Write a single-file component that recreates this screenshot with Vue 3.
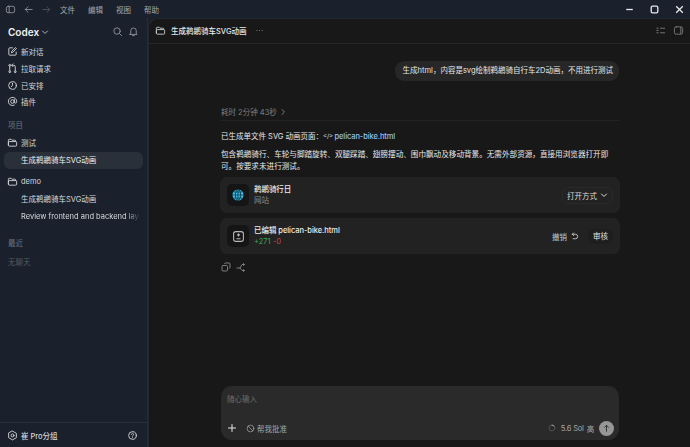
<template>
  <div class="window">
    <header class="titlebar">
      <svg class="ic tb-panel" viewBox="0 0 12 12"><rect x="1.5" y="2.5" width="9" height="7" rx="2" /><path d="M4.5 2.5v7" /></svg>
      <svg class="ic tb-arrow" viewBox="0 0 12 12"><path d="M10 6H2.5M5.5 3 2.5 6l3 3" /></svg>
      <svg class="ic tb-arrow dim" viewBox="0 0 12 12"><path d="M2 6h7.5M6.5 3l3 3-3 3" /></svg>
      <nav class="menu">
        <span v-for="m in menus" :key="m">{{ m }}</span>
      </nav>
      <div class="win-controls">
        <svg class="wc" viewBox="0 0 10 10"><path d="M2 5h6" /></svg>
        <svg class="wc" viewBox="0 0 10 10"><rect x="2" y="2" width="6" height="6" rx="1.2" /></svg>
        <svg class="wc" viewBox="0 0 10 10"><path d="m2 2 6 6M8 2 2 8" /></svg>
      </div>
    </header>

    <div class="body">
      <aside class="sidebar">
        <div class="brand">
          <span class="brand-name">Codex</span>
          <svg class="ic chevron" viewBox="0 0 8 8"><path d="m1.5 3 2.5 2.5L6.5 3" /></svg>
          <span class="spacer"></span>
          <svg class="ic side-top" viewBox="0 0 12 12"><circle cx="5.5" cy="5.5" r="3.5" /><path d="m8 8 2.5 2.5" /></svg>
          <svg class="ic side-top" viewBox="0 0 12 12"><path d="M3 8.5V5.2a3 3 0 0 1 6 0v3.3l1 .7H2zM5 10.5h2" /></svg>
        </div>

        <div class="nav">
          <div class="nav-item">
            <svg class="ic" viewBox="0 0 12 12"><path d="M6 2H3a1 1 0 0 0-1 1v6a1 1 0 0 0 1 1h6a1 1 0 0 0 1-1V6.500M5 7l.4-1.600L9.200 1.700l1.100 1.100L6.600 6.600z" /></svg>
            新对话
          </div>
          <div class="nav-item">
            <svg class="ic" viewBox="0 0 12 12"><path d="M3 4v4.500M3 10.500a1 1 0 1 0 0-2 1 1 0 0 0 0 2M3 3.500a1 1 0 1 0 0-2 1 1 0 0 0 0 2M5.500 2.500h2A1.500 1.500 0 0 1 9 4v4.500M9 10.500a1 1 0 1 0 0-2 1 1 0 0 0 0 2M6.500 1 5 2.500 6.500 4" /></svg>
            拉取请求
          </div>
          <div class="nav-item">
            <svg class="ic" viewBox="0 0 12 12"><circle cx="6" cy="6" r="4.200" /><path d="M6 3.500V6L4.500 7.500" /></svg>
            已安排
          </div>
          <div class="nav-item">
            <svg class="ic" viewBox="0 0 12 12"><circle cx="6" cy="6" r="2" /><path d="M8 4v2.800a1.300 1.300 0 0 0 2.500 0V6A4.500 4.500 0 1 0 8 10" /></svg>
            插件
          </div>
        </div>

        <div class="section-label projects">项目</div>
        <div class="nav-item">
          <svg class="ic" viewBox="0 0 12 12"><path d="M1.500 9V3.500a1 1 0 0 1 1-1h2l1 1h3a1 1 0 0 1 1 1v.5M1.500 9a1 1 0 0 0 1 1h7a1 1 0 0 0 1-1V6a1 1 0 0 0-1-1h-7a1 1 0 0 0-1 1z" /></svg>
          测试
        </div>
        <div class="thread active">生成鹈鹕骑车SVG动画</div>

        <div class="nav-item demo">
          <svg class="ic" viewBox="0 0 12 12"><path d="M1.500 9V3.500a1 1 0 0 1 1-1h2l1 1h3a1 1 0 0 1 1 1v.5M1.500 9a1 1 0 0 0 1 1h7a1 1 0 0 0 1-1V6a1 1 0 0 0-1-1h-7a1 1 0 0 0-1 1z" /></svg>
          demo
        </div>
        <div class="thread first-thread">生成鹈鹕骑车SVG动画</div>
        <div class="thread fade">Review frontend and backend layout</div>

        <div class="section-label recent">最近</div>
        <div class="section-label empty">无聊天</div>

        <div class="spacer"></div>
        <footer class="side-footer">
          <svg class="ic" viewBox="0 0 12 12"><path d="m6 1.200 4.200 2.400v4.800L6 10.800 1.800 8.400V3.600z" /><circle cx="6" cy="6" r="1.600" /></svg>
          <span class="user-name">崔 Pro分组</span>
          <span class="spacer"></span>
          <svg class="ic" viewBox="0 0 12 12"><circle cx="6" cy="6" r="4.200" /><path d="M4.800 4.800a1.200 1.200 0 1 1 1.800 1.100c-.4.200-.6.500-.6.800M6 8.400h.1" /></svg>
        </footer>
      </aside>

      <main class="main">
        <div class="main-head">
          <svg class="ic" viewBox="0 0 12 12"><path d="M1.500 9V3.500a1 1 0 0 1 1-1h2l1 1h3a1 1 0 0 1 1 1v.5M1.500 9a1 1 0 0 0 1 1h7a1 1 0 0 0 1-1V6a1 1 0 0 0-1-1h-7a1 1 0 0 0-1 1z" /></svg>
          <span class="head-title">生成鹈鹕骑车SVG动画</span>
          <svg class="more-dots" viewBox="0 0 8 3"><circle cx="1" cy="1.500" r=".6" /><circle cx="4" cy="1.500" r=".6" /><circle cx="7" cy="1.500" r=".6" /></svg>
          <span class="spacer"></span>
          <svg class="ic head-tool" viewBox="0 0 12 12"><path d="M2 3.500h1.500M2 6h1.500M2 8.500h1.500M6 3.500h4.500M6 8.500h4.500" /></svg>
          <svg class="ic head-tool" viewBox="0 0 12 12"><rect x="1.500" y="2" width="9" height="8" rx="2" /><path d="M8.500 2.500v7" /></svg>
        </div>

        <div class="chat">
          <div class="user-row">
            <div class="bubble">生成html，内容是svg绘制鹈鹕骑自行车2D动画，不用进行测试</div>
          </div>

          <div class="elapsed">
            耗时 2分钟 43秒
            <svg class="ic small" viewBox="0 0 8 8"><path d="m3 1.500 2.500 2.500L3 6.500" /></svg>
          </div>

          <p class="line first">
            已生成单文件 SVG 动画页面：<span class="file-link"><span class="code-tag">&lt;/&gt;</span>pelican-bike.html</span>
          </p>
          <p class="line para">包含鹈鹕骑行、车轮与脚踏旋转、双腿踩踏、翅膀摆动、围巾飘动及移动背景。无需外部资源，直接用浏览器打开即可。按要求未进行测试。</p>

          <div class="card first-card">
            <div class="card-icon">
              <svg class="globe" viewBox="0 0 12 12">
                <circle cx="6" cy="6" r="5.500" fill="#35c3f2" />
                <path d="M6 .5v11M.5 6h11M2 3h8M2 9h8" stroke="#12333f" stroke-width=".8" fill="none" />
                <ellipse cx="6" cy="6" rx="2.600" ry="5.500" stroke="#12333f" stroke-width=".8" fill="none" />
              </svg>
            </div>
            <div class="card-text">
              <div class="card-title">鹈鹕骑行日</div>
              <div class="card-sub">网站</div>
            </div>
            <span class="spacer"></span>
            <div class="open-with">
              打开方式
              <svg class="ic small" viewBox="0 0 8 8"><path d="m1.500 3 2.500 2.500L6.500 3" /></svg>
            </div>
          </div>

          <div class="card">
            <div class="card-icon">
              <svg class="ic file" viewBox="0 0 12 12"><rect x="1.500" y="1.500" width="9" height="9" rx="2" /><path d="M6 3.500v2M5 4.500h2M4.500 8h3" /></svg>
            </div>
            <div class="card-text">
              <div class="card-title">已编辑 pelican-bike.html</div>
              <div class="card-sub"><span class="add">+271</span> <span class="del">-0</span></div>
            </div>
            <span class="spacer"></span>
            <span class="undo">
              撤销
              <svg class="ic small-2" viewBox="0 0 10 10"><path d="M2.500 2.500h3.500a2 2 0 0 1 0 5H3.500M4 1 2.500 2.500 4 4" /></svg>
            </span>
            <span class="review">审核</span>
          </div>

          <div class="actions">
            <svg class="ic act" viewBox="0 0 10 10"><rect x="1" y="3.500" width="5.500" height="5.500" rx="1" /><path d="M3.500 1.500a.8.800 0 0 1 .8-.5H8a1 1 0 0 1 1 1v3.500a1 1 0 0 1-.8.9" /></svg>
            <svg class="ic act" viewBox="0 0 10 10"><path d="M1 6h3l2-3.500h2.500M4 6l2 2.500h2.500M7.500 1.500l1 1-1 1M7.500 7.500l1 1-1 1" /></svg>
          </div>
        </div>

        <div class="composer-wrap">
          <div class="composer">
            <div class="placeholder">随心输入</div>
            <div class="composer-bar">
              <svg class="ic plus" viewBox="0 0 10 10"><path d="M5 1.500v7M1.500 5h7" /></svg>
              <svg class="ic approve" viewBox="0 0 12 12"><circle cx="6" cy="6" r="4.500" /><path d="M3 3l6 6" /></svg>
              <span class="approve-text">帮我批准</span>
              <span class="spacer"></span>
              <svg class="ic spin" viewBox="0 0 12 12"><circle cx="6" cy="6" r="3.500" /><path class="spin-top" d="M6 2.500a3.500 3.500 0 0 1 2.500 1" /></svg>
              <span class="model">5.6 Sol</span>
              <span class="model effort">高</span>
              <button class="send">
                <svg class="send-ic" viewBox="0 0 10 10"><path d="M5 8.500v-7M2.500 4 5 1.500 7.500 4" /></svg>
              </button>
            </div>
          </div>
        </div>
      </main>
    </div>
  </div>
</template>

<script setup>
const menus = ['文件', '编辑', '视图', '帮助']
</script>

<style>
html, body {
  margin: 0;
  background: #1a212c;
}
</style>

<style scoped>
.window {
  width: 690px;
  height: 447px;
  display: flex;
  flex-direction: column;
  overflow: hidden;
  background: #1a212c;
  color: #e4e6e9;
  font-family: "Inter", "Noto Sans CJK SC", sans-serif;
  font-size: 7.5px;
}

.ic {
  width: 11px;
  height: 11px;
  flex: none;
  fill: none;
  stroke: currentColor;
  stroke-width: 1;
  stroke-linecap: round;
  stroke-linejoin: round;
}

.spacer {
  flex: 1;
}

.titlebar {
  height: 18px;
  display: flex;
  align-items: center;
  padding-left: 5px;
  flex: none;
  color: #8b9096;
}

.tb-panel {
  margin-right: 7px;
}

.tb-arrow {
  margin-right: 7px;
}

.tb-arrow.dim {
  color: #4b5058;
}

.menu {
  display: flex;
  gap: 13px;
  margin-left: 1px;
  color: #a3a7ac;
}

.win-controls {
  margin-left: auto;
  display: flex;
  gap: 14px;
  padding-right: 5px;
}

.wc {
  width: 11px;
  height: 11px;
  fill: none;
  stroke: #e6e8ea;
  stroke-width: 1.2;
}

.body {
  flex: 1;
  display: flex;
  min-height: 0;
}

.sidebar {
  width: 148px;
  flex: none;
  display: flex;
  flex-direction: column;
  border-right: 1px solid #262c36;
  box-sizing: border-box;
}

.brand {
  height: 23.5px;
  margin-top: 2px;
  display: flex;
  align-items: center;
  padding: 0 8px;
}

.brand-name {
  font-size: 10px;
  font-weight: 600;
  color: #f0f1f3;
}

.chevron {
  width: 8px;
  height: 8px;
  margin-left: 2px;
  color: #b0b4b9;
}

.side-top {
  margin-left: 5px;
  color: #8c9198;
}

.nav {
  display: flex;
  flex-direction: column;
}

.nav-item {
  height: 16.7px;
  display: flex;
  align-items: center;
  gap: 3px;
  padding-left: 7px;
  color: #d3d6d9;
}

.section-label {
  padding-left: 8px;
  color: #6f757c;
  height: 17px;
  line-height: 17px;
}

.projects {
  margin-top: 7.2px;
}

.thread {
  height: 17px;
  line-height: 17px;
  margin: 0 4px;
  padding-left: 17px;
  border-radius: 6px;
  color: #d7dadd;
  white-space: nowrap;
  overflow: hidden;
}

.thread.active {
  background: #2a303a;
  color: #eceef0;
  margin-top: 1px;
}

.first-thread {
  margin-top: 1px;
}

.thread.fade {
  -webkit-mask-image: linear-gradient(to right, #000 88%, transparent 98%);
  mask-image: linear-gradient(to right, #000 88%, transparent 98%);
}

.demo {
  margin-top: 4px;
}

.recent {
  margin-top: 10px;
}

.empty {
  margin-top: 2px;
  color: #565c63;
}

.side-footer {
  height: 24px;
  display: flex;
  align-items: center;
  gap: 3px;
  padding: 0 9px 0 7px;
  border-top: 1px solid #2a303a;
  color: #d3d6d9;
  flex: none;
}

.user-name {
  font-weight: 500;
}

.main {
  flex: 1;
  min-width: 0;
  display: flex;
  flex-direction: column;
  background: #181818;
  border-top-left-radius: 9px;
  box-shadow: inset 1px 1px 0 #232830;
}

.main-head {
  height: 25px;
  flex: none;
  display: flex;
  align-items: center;
  gap: 3px;
  padding: 0 6px 0 7px;
  border-bottom: 1px solid #262626;
  color: #c9cbce;
}

.head-title {
  margin-left: 2px;
  color: #e8e9ea;
  font-weight: 500;
}

.more-dots {
  width: 7px;
  height: 3px;
  margin-left: 6px;
  fill: #8c8c8c;
}

.head-tool {
  margin-left: 4px;
  color: #7c7c7c;
}

.chat {
  flex: 1;
  min-height: 0;
  padding: 17px 71px 0 73px;
}

.user-row {
  display: flex;
  justify-content: flex-end;
}

.bubble {
  height: 20px;
  line-height: 20px;
  padding: 0 6px 0 8px;
  border-radius: 9px;
  background: #272727;
  color: #e6e6e6;
  white-space: nowrap;
}

.elapsed {
  margin-top: 23px;
  height: 15px;
  display: flex;
  align-items: center;
  gap: 2px;
  color: #7d7d7d;
  border-bottom: 1px solid #232323;
  padding-bottom: 1px;
}

.small {
  width: 8px;
  height: 8px;
}

.small-2 {
  width: 9px;
  height: 9px;
}

.line {
  margin: 0;
  color: #e8e8e8;
  line-height: 12px;
}

.first {
  margin-top: 10px;
}

.para {
  margin-top: 6px;
  font-size: 7.6px;
}

.file-link {
  color: #8fc3f0;
  font-weight: 500;
  letter-spacing: -0.1px;
}

.code-tag {
  font-size: 6px;
  color: #b4d3ee;
  margin-right: 1.5px;
  position: relative;
  top: -1px;
}

.card {
  height: 36px;
  margin: 5px -1px 0;
  padding: 0 7px;
  box-sizing: border-box;
  display: flex;
  align-items: center;
  background: #222222;
  border-radius: 7px;
}

.first-card {
  margin-top: 4px;
}

.card-icon {
  width: 22px;
  height: 22px;
  border-radius: 5px;
  background: #151515;
  display: flex;
  align-items: center;
  justify-content: center;
  margin-right: 5px;
}

.globe {
  width: 12px;
  height: 12px;
}

.file {
  width: 13px;
  height: 13px;
  color: #b8b8b8;
}

.card-text {
  display: flex;
  flex-direction: column;
  padding-top: 2px;
}

.card-title {
  color: #ededed;
  line-height: 10.7px;
  font-weight: 500;
  letter-spacing: -0.05px;
}

.card-sub {
  color: #8a8a8a;
  line-height: 10.7px;
}

.add {
  color: #3fa45c;
}

.del {
  color: #c8423f;
}

.open-with {
  height: 15px;
  display: flex;
  align-items: center;
  gap: 3px;
  padding: 0 4px;
  color: #dcdcdc;
  border: 1px solid #2a2a2a;
  border-radius: 6px;
}

.undo {
  display: flex;
  align-items: center;
  gap: 3px;
  color: #c9c9c9;
}

.review {
  margin-left: 9px;
  padding: 0 5px;
  height: 15px;
  line-height: 15px;
  border-radius: 6px;
  background: #1e1e1e;
  color: #e0e0e0;
}

.actions {
  margin-top: 8px;
  display: flex;
  gap: 5px;
  color: #7d7d7d;
}

.act {
  width: 10px;
  height: 10px;
}

.composer-wrap {
  flex: none;
  padding: 0 71px 7px 73px;
}

.composer {
  height: 54px;
  box-sizing: border-box;
  background: #2a2a2a;
  border-radius: 11px;
  padding: 8px 5px 4px 6px;
  display: flex;
  flex-direction: column;
}

.placeholder {
  color: #6d6d6d;
  line-height: 12px;
}

.composer-bar {
  margin-top: auto;
  height: 16px;
  display: flex;
  align-items: center;
  color: #b0b0b0;
}

.plus {
  width: 10px;
  height: 10px;
  color: #e6e6e6;
}

.approve {
  width: 9px;
  height: 9px;
  margin-left: 9px;
  color: #a0a0a0;
}

.approve-text {
  margin-left: 2px;
  color: #a5a5a5;
}

.spin {
  width: 10px;
  height: 10px;
  color: #555555;
}

.spin-top {
  stroke: #b5b5b5;
}

.model {
  margin-left: 4px;
  color: #a8a8a8;
  letter-spacing: -0.2px;
}

.effort {
  margin-left: 3px;
}

.send {
  width: 15px;
  height: 15px;
  margin-left: 5px;
  padding: 0;
  border: 0;
  border-radius: 50%;
  background: #979797;
  display: flex;
  align-items: center;
  justify-content: center;
}

.send-ic {
  width: 9px;
  height: 9px;
  fill: none;
  stroke: #2a2a2a;
  stroke-width: 1;
}
</style>
